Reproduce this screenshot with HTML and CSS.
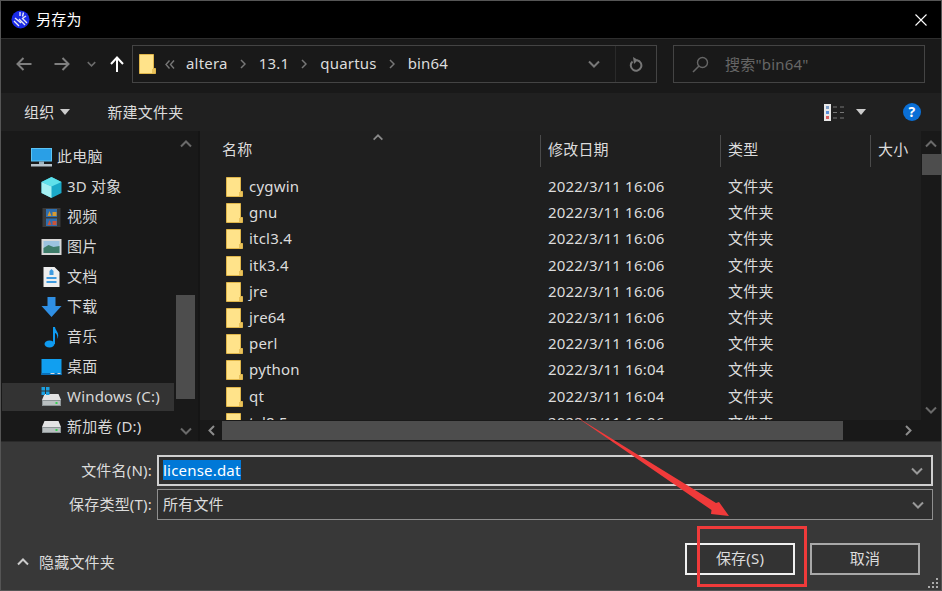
FILE: index.html
```html
<!DOCTYPE html>
<html>
<head>
<meta charset="UTF-8">
<title>另存为</title>
<link rel="stylesheet" href="styles.css">
</head>
<body>
<svg class="defs" width="0" height="0">
	<symbol id="folder" viewBox="0 0 17 20">
		<path d="M.5.5H14.5V14.5H16.5V19.5H.5Z" fill="#ffe38a" stroke="#e0b64a"/>
		<path d="M13 19V15H16V19Z" fill="#e9c25c"/>
	</symbol>
	<symbol id="drive" viewBox="0 0 20 14">
		<path d="M3 1H17L19.500 7V13H.5V7Z" fill="#e4e4e4"/>
		<rect x=".5" y="7" width="19" height="6" fill="#8d9496"/>
		<rect x="1.500" y="8" width="17" height="4" fill="#b9bfc0"/>
		<rect x="14" y="9" width="2" height="2" fill="#39d353"/>
	</symbol>
	<symbol id="chev-up" viewBox="0 0 12 8">
		<path d="M1 6.500L6 1.500L11 6.500" fill="none" stroke="currentColor" stroke-width="2"/>
	</symbol>
	<symbol id="chev-down" viewBox="0 0 12 8">
		<path d="M1 1.500L6 6.500L11 1.500" fill="none" stroke="currentColor" stroke-width="2"/>
	</symbol>
</svg>

<div class="window">
	<div class="titlebar">
		<svg class="app_icon" width="20" height="20" viewBox="0 0 20 20">
			<circle cx="9.500" cy="9.500" r="9" fill="#1a2be8"/>
			<path d="M9 2V6M12.500 2.500L11.500 6.500M15 6L12 8M4 8L10 13M3 11L8 16M8 9L14 15M11 8L16 13" stroke="#e8e8f4" stroke-width="1.400" fill="none"/>
		</svg>
		<span class="title_text">另存为</span>
		<svg class="close" width="12" height="12" viewBox="0 0 12 12">
			<path d="M.5.5L11.500 11.500M11.500.5L.5 11.500" stroke="#fff" stroke-width="1.100"/>
		</svg>
	</div>

	<div class="navbar">
		<svg class="nav_btn back" width="16" height="14" viewBox="0 0 16 14">
			<path d="M15.500 7H2M7.500 1L1.500 7L7.500 13" fill="none" stroke="#7f7f7f" stroke-width="2"/>
		</svg>
		<svg class="nav_btn forward" width="16" height="14" viewBox="0 0 16 14">
			<path d="M.5 7H14M8.500 1L14.500 7L8.500 13" fill="none" stroke="#7f7f7f" stroke-width="2"/>
		</svg>
		<svg class="nav_btn recent" width="9" height="6" viewBox="0 0 12 8"><use href="#chev-down" color="#6c6c6c"/></svg>
		<svg class="nav_btn up" width="14" height="16" viewBox="0 0 14 16">
			<path d="M7 16V2M1 8L7 1.500L13 8" fill="none" stroke="#fff" stroke-width="2"/>
		</svg>
		<div class="address">
			<svg class="crumb_folder" width="17" height="20"><use href="#folder"/></svg>
			<svg class="overflow" width="10" height="9" viewBox="0 0 10 9"><path d="M4.500 .5L1 4.500L4.500 8.500M9 .5L5.500 4.500L9 8.500" fill="none" stroke="#777" stroke-width="1.400"/></svg>
			<span class="crumb crumb_first">altera</span>
			<svg class="sep" width="6" height="10" viewBox="0 0 6 10"><path d="M1 1L5 5L1 9" fill="none" stroke="#777" stroke-width="1.500"/></svg>
			<span class="crumb">13.1</span>
			<svg class="sep" width="6" height="10" viewBox="0 0 6 10"><path d="M1 1L5 5L1 9" fill="none" stroke="#777" stroke-width="1.500"/></svg>
			<span class="crumb">quartus</span>
			<svg class="sep" width="6" height="10" viewBox="0 0 6 10"><path d="M1 1L5 5L1 9" fill="none" stroke="#777" stroke-width="1.500"/></svg>
			<span class="crumb">bin64</span>
			<svg class="addr_drop" width="12" height="8"><use href="#chev-down" color="#777"/></svg>
			<div class="refresh">
				<svg width="14" height="15" viewBox="0 0 14 15">
					<path d="M8 3.200A5.300 5.300 0 1 1 3.500 4.500" fill="none" stroke="#777" stroke-width="2"/>
					<path d="M4 0L9 3L5 7Z" fill="#777"/>
				</svg>
			</div>
		</div>
		<div class="search">
			<svg width="17" height="17" viewBox="0 0 17 17">
				<circle cx="10.500" cy="6.500" r="5" fill="none" stroke="#666" stroke-width="1.400"/>
				<path d="M7 10L1 16" stroke="#666" stroke-width="1.600"/>
			</svg>
			<span class="search_text">搜索"bin64"</span>
		</div>
	</div>

	<div class="toolbar">
		<span class="tool">组织</span>
		<span class="caret organize_caret"></span>
		<span class="tool new_folder">新建文件夹</span>
		<svg class="view_icon" width="21" height="17" viewBox="0 0 21 17">
			<rect x="0" y="0" width="7" height="17" fill="#e8e8e8"/>
			<rect x="2" y="2" width="3" height="3" fill="#7a9cc6"/>
			<rect x="2" y="7" width="3" height="3" fill="#5a8fd8"/>
			<rect x="2" y="12" width="3" height="3" fill="#d85a5a"/>
			<path d="M9 3H13M16 3H20M9 8.500H13M16 8.500H20M9 14H13M16 14H20" stroke="#777" stroke-width="1"/>
		</svg>
		<span class="caret view_caret"></span>
		<span class="help">?</span>
	</div>

	<div class="main">
		<div class="sidebar">
			<ul class="tree">
				<li class="tree_item root">
					<svg width="21" height="19" viewBox="0 0 21 19">
						<rect x="0" y="0" width="21" height="13.500" fill="#5cc4f5"/>
						<rect x="1" y="1" width="19" height="11.500" fill="#2a9fe6"/>
						<rect x="8" y="13.500" width="5" height="2.500" fill="#9db4c0"/>
						<rect x="0" y="16" width="21" height="2.500" fill="#b8c4cc"/>
					</svg>
					<span>此电脑</span>
				</li>
				<li class="tree_item">
					<svg width="21" height="21" viewBox="0 0 21 21">
						<path d="M10.500 0L20.500 5V16L10.500 21L.5 16V5Z" fill="#1aa9c9"/>
						<path d="M10.500 0L20.500 5L10.500 9.500L.5 5Z" fill="#5fe0ea"/>
						<path d="M.5 5L10.500 9.500V21L.5 16Z" fill="#a5f0f2"/>
					</svg>
					<span>3D 对象</span>
				</li>
				<li class="tree_item">
					<svg width="18" height="19" viewBox="0 0 18 19">
						<rect width="18" height="19" fill="#3a3a3a"/>
						<rect x="3.500" y="1" width="11" height="8" fill="#2f6fb0"/>
						<rect x="3.500" y="10.500" width="11" height="7.500" fill="#2f6fb0"/>
						<path d="M5 8L7 3L9 8ZM10 8H14V4H10Z" fill="#d89a30"/>
						<path d="M5 17L7 12L9 17ZM10 17H14V13H10Z" fill="#c8543c"/>
					</svg>
					<span>视频</span>
				</li>
				<li class="tree_item">
					<svg width="20" height="16" viewBox="0 0 20 16">
						<rect width="20" height="16" fill="#d8d8d8"/>
						<rect x="2" y="2" width="16" height="12" fill="#9cc3df"/>
						<path d="M2 9L7 6L12 8L18 7V14H2Z" fill="#3f7d6a"/>
					</svg>
					<span>图片</span>
				</li>
				<li class="tree_item">
					<svg width="16" height="20" viewBox="0 0 16 20">
						<path d="M0 0H11L16 5V20H0Z" fill="#eeeeee"/>
						<path d="M6 4L8 2L10 4V8H6ZM3 10H13V12H3ZM3 14H13V16H3Z" fill="#3f9be0"/>
					</svg>
					<span>文档</span>
				</li>
				<li class="tree_item">
					<svg width="20" height="20" viewBox="0 0 20 20">
						<path d="M6 0H14V9H20L10 20L0 9H6Z" fill="#2f8fe4"/>
					</svg>
					<span>下载</span>
				</li>
				<li class="tree_item">
					<svg width="20" height="21" viewBox="0 0 20 21">
						<ellipse cx="8" cy="17" rx="5" ry="3.500" fill="#0f9bf0"/>
						<path d="M11.500 17V0H13.500C14 4 18.500 6 16 12C16 8 15 6.500 13.500 6V17Z" fill="#0f9bf0"/>
					</svg>
					<span>音乐</span>
				</li>
				<li class="tree_item">
					<svg width="20" height="16" viewBox="0 0 20 16">
						<rect width="20" height="16" fill="#119ff0"/>
						<rect x="0" y="14" width="20" height="2" fill="#0a6fb8"/>
						<rect x="9" y="14" width="4" height="1" fill="#ddd"/>
						<rect x="16" y="14" width="3" height="1" fill="#ddd"/>
					</svg>
					<span>桌面</span>
				</li>
				<li class="tree_item selected">
					<svg width="20" height="20" viewBox="0 0 20 20">
						<use href="#drive" y="6" width="20" height="14"/>
						<path d="M0 0H3.500V3.500H0ZM4.500 0H8V3.500H4.500ZM0 4.500H3.500V8H0ZM4.500 4.500H8V8H4.500Z" fill="#1ba1e2"/>
					</svg>
					<span>Windows (C:)</span>
				</li>
				<li class="tree_item">
					<svg width="20" height="14"><use href="#drive"/></svg>
					<span>新加卷 (D:)</span>
				</li>
			</ul>
			<div class="vscroll side_scroll">
				<svg class="arrow_top" width="12" height="8"><use href="#chev-up"/></svg>
				<div class="side_thumb"></div>
				<svg class="arrow_bottom" width="12" height="8"><use href="#chev-down"/></svg>
			</div>
		</div>

		<div class="content">
			<div class="content_top">
				<div class="files">
					<div class="columns">
						<div class="col col_name">名称
							<svg class="sort" width="12" height="7" viewBox="0 0 12 8"><use href="#chev-up" color="#8a8a8a"/></svg>
						</div>
						<div class="col col_date">修改日期</div>
						<div class="col col_type">类型</div>
						<div class="col col_size">大小</div>
					</div>
					<div class="rows" id="rows"></div>
				</div>
				<div class="vscroll list_scroll">
					<svg class="arrow_top" width="12" height="8"><use href="#chev-up"/></svg>
					<div class="list_thumb"></div>
					<svg class="arrow_bottom" width="12" height="8"><use href="#chev-down"/></svg>
				</div>
			</div>
			<div class="hscroll">
				<svg width="7" height="11" viewBox="0 0 7 11"><path d="M6 1L1.500 5.500L6 10" fill="none" stroke="#8c8c8c" stroke-width="2"/></svg>
				<div class="h_thumb"></div>
				<svg class="h_right" width="7" height="11" viewBox="0 0 7 11"><path d="M1 1L5.500 5.500L1 10" fill="none" stroke="#8c8c8c" stroke-width="2"/></svg>
			</div>
		</div>
	</div>

	<div class="bottom">
		<div class="field">
			<label class="field_label">文件名(N):</label>
			<div class="field_box name_box">
				<span class="selected_text">license.dat</span>
				<svg width="12" height="8"><use href="#chev-down" color="#999"/></svg>
			</div>
		</div>
		<div class="field">
			<label class="field_label">保存类型(T):</label>
			<div class="field_box type_box">
				<span>所有文件</span>
				<svg width="12" height="8"><use href="#chev-down" color="#999"/></svg>
			</div>
		</div>
		<div class="actions">
			<div class="hide_folders">
				<svg width="12" height="8"><use href="#chev-up" color="#ccc"/></svg>
				<span>隐藏文件夹</span>
			</div>
			<button class="btn btn_save">保存(S)</button>
			<button class="btn btn_cancel">取消</button>
		</div>
		<svg class="grip" width="10" height="10" viewBox="0 0 10 10">
			<path d="M8 0h2v2H8ZM4 4h2v2H4ZM8 4h2v2H8ZM0 8h2v2H0ZM4 8h2v2H4ZM8 8h2v2H8Z" fill="#aaa"/>
		</svg>
	</div>

	<!-- 红色标注 -->
	<svg class="mark_arrow" width="942" height="591" viewBox="0 0 942 591">
		<polygon points="575,416 716,503 719,502 729,516 711,514 711.500,510" fill="#f03a3a"/>
	</svg>
	<div class="mark_box"></div>
</div>

<script type="text/javascript">
	var folders = [
		['cygwin', '16:06'], ['gnu', '16:06'], ['itcl3.4', '16:06'], ['itk3.4', '16:06'],
		['jre', '16:06'], ['jre64', '16:06'], ['perl', '16:06'], ['python', '16:04'],
		['qt', '16:04'], ['tcl8.5', '16:06']
	];
	var html = '';
	for (var i = 0; i < folders.length; i++) {
		html += '<div class="row">'
			+ '<svg class="row_icon" width="17" height="20"><use href="#folder"/></svg>'
			+ '<span class="row_name">' + folders[i][0] + '</span>'
			+ '<span class="row_date">2022/3/11 ' + folders[i][1] + '</span>'
			+ '<span>文件夹</span></div>';
	}
	document.getElementById('rows').innerHTML = html;
</script>
</body>
</html>
```

FILE: styles.css
```css
* {
	box-sizing: border-box;
}

html, body {
	margin: 0;
	height: 100%;
	background: #000;
}

.defs {
	position: absolute;
}

.window {
	position: relative;
	display: flex;
	flex-direction: column;
	width: 942px;
	height: 591px;
	overflow: hidden;
	border: 1px solid #555;
	background: #191919;
	color: #dcdcdc;
	font-family: "Noto Sans", "Noto Sans CJK SC", sans-serif;
	font-size: 15px;
	letter-spacing: .2px;
	line-height: 20px;
}

svg {
	display: block;
	flex: none;
}

/* 文字比图标略高一点 */
.title_text, .crumb, .tree_item span, .row span, .field_label, .field_box span {
	margin-top: -2px;
}

/* 标题栏 */
.titlebar {
	display: flex;
	align-items: center;
	flex: none;
	height: 38px;
	background: #000;
	border-bottom: 1px solid #2e2e2e;
	color: #fff;
}

.app_icon {
	margin-left: 10px;
}

.title_text {
	margin-left: 5px;
}

.close {
	margin-left: auto;
	margin-right: 14px;
}

/* 地址栏 */
.navbar {
	display: flex;
	align-items: center;
	flex: none;
	height: 54px;
	padding-bottom: 4px;
	background: #191919;
}

.back {
	margin-left: 15px;
}

.forward {
	margin-left: 22px;
}

.recent {
	margin-left: 17px;
}

.up {
	margin-left: 14px;
}

.address {
	display: flex;
	align-items: center;
	width: 525px;
	height: 38px;
	margin-left: 8px;
	border: 1px solid #444;
}

.crumb_folder {
	margin-left: 6px;
}

.overflow {
	margin-left: 9px;
}

.crumb {
	margin-left: 13px;
	margin-right: 12px;
}

.crumb_first {
	margin-left: 11px;
}

.addr_drop {
	margin-left: auto;
	margin-right: 15px;
}

.refresh {
	display: flex;
	align-items: center;
	justify-content: center;
	width: 41px;
	height: 100%;
	border-left: 1px solid #2a2a2a;
}

.search {
	display: flex;
	align-items: center;
	width: 252px;
	height: 38px;
	margin-left: 16px;
	padding-left: 18px;
	border: 1px solid #444;
	color: #666;
}

.search_text {
	margin-left: 16px;
}

/* 工具栏 */
.toolbar {
	display: flex;
	align-items: center;
	flex: none;
	height: 38px;
	background: #202020;
}

.tool {
	margin-left: 23px;
}

.caret {
	width: 0;
	height: 0;
	border-left: 5.5px solid transparent;
	border-right: 5.5px solid transparent;
	border-top: 6px solid #ccc;
}

.organize_caret {
	margin-left: 6px;
}

.new_folder {
	margin-left: 37px;
}

.view_icon {
	margin-left: auto;
}

.view_caret {
	margin-left: 11px;
}

.help {
	width: 18px;
	height: 18px;
	margin-left: 37px;
	margin-right: 20px;
	border-radius: 50%;
	background: #0a6fd6;
	color: #fff;
	font-size: 14px;
	font-weight: 700;
	line-height: 18px;
	text-align: center;
}

/* 主体 */
.main {
	display: flex;
	flex: none;
	height: 310px;
}

.sidebar {
	display: flex;
	flex: none;
	width: 199px;
	padding-right: 3px;
	background: #191919;
	border-right: 2px solid #151515;
}

.tree {
	flex: 1;
	margin: 0;
	padding: 11px 0 0 1px;
	list-style: none;
}

.tree_item {
	display: flex;
	align-items: center;
	height: 30px;
	padding-left: 39px;
	color: #d8d8d8;
}

.tree_item svg {
	width: 21px;
	margin-right: 5px;
}

.tree_item.root {
	padding-left: 29px;
}

.tree_item.selected {
	background: #333;
	height: 28px;
	margin: 1px 2px 1px 0;
}

.vscroll {
	display: flex;
	flex-direction: column;
	align-items: center;
	flex: none;
	width: 19px;
	color: #6a6a6a;
}

.arrow_top {
	margin-top: 9px;
}

.arrow_bottom {
	margin-top: auto;
	margin-bottom: 6px;
}

.side_thumb {
	width: 19px;
	height: 104px;
	margin-top: 147px;
	background: #4d4d4d;
}

.content {
	display: flex;
	flex-direction: column;
	flex: 1;
	min-width: 0;
	background: #1f1f1f;
}

.content_top {
	display: flex;
	flex: none;
	height: 289px;
}

.files {
	flex: 1;
	min-width: 0;
	overflow: hidden;
}

.columns {
	display: flex;
	align-items: center;
	height: 37px;
	padding-top: 2px;
}

.col {
	position: relative;
	height: 32px;
	padding: 4px 0 0 7px;
	border-right: 1px solid #4a4a4a;
}

.col_name {
	width: 341px;
	padding-left: 22px;
}

.col_date {
	width: 180px;
}

.col_type {
	width: 150px;
}

.col_size {
	flex: 1;
	border-right: none;
}

.sort {
	position: absolute;
	top: -1px;
	left: 172px;
}

.rows {
	height: 252px;
	padding-top: 6px;
	overflow: hidden;
}

.row {
	display: flex;
	align-items: center;
	height: 26.2px;
	padding-left: 26px;
}

.row_name {
	width: 299px;
	margin-left: 6px;
}

.row_date {
	width: 180px;
}

.list_scroll {
	width: 20px;
	background: #191919;
}

.list_thumb {
	width: 19px;
	height: 21px;
	margin-top: 6px;
	background: #4d4d4d;
}

.hscroll {
	display: flex;
	align-items: center;
	flex: none;
	height: 21px;
	padding-left: 8px;
	background: #191919;
}

.h_thumb {
	width: 621px;
	height: 19px;
	margin-left: 7px;
	background: #4d4d4d;
}

.h_right {
	margin-left: 62px;
}

/* 底部 */
.bottom {
	position: relative;
	flex: 1;
	padding-top: 13px;
	background: #383838;
	border-top: 1px solid #2a2a2a;
}

.field {
	display: flex;
	align-items: center;
	height: 31px;
	margin-bottom: 3px;
}

.field_label {
	width: 151px;
	text-align: right;
}

.field_box {
	display: flex;
	align-items: center;
	justify-content: space-between;
	width: 776px;
	height: 31px;
	margin-left: 5px;
	padding: 0 8px 0 4px;
	background: #2f2f2f;
}

.name_box {
	border: 2px solid #d0d0d0;
}

.type_box {
	padding-left: 5px;
	border: 1px solid #8f8f8f;
}

.selected_text {
	background: #0078d7;
	color: #fff;
}

.actions {
	display: flex;
	align-items: center;
	margin-top: 23px;
}

.hide_folders {
	display: flex;
	align-items: center;
	margin-top: 5px;
	margin-left: 16px;
	margin-right: auto;
}

.hide_folders span {
	margin-left: 10px;
}

.btn {
	width: 110px;
	height: 32px;
	padding: 0 0 3px;
	background: #333;
	color: #dcdcdc;
	font: inherit;
	letter-spacing: inherit;
}

.btn_save {
	border: 2px solid #f0f0f0;
}

.btn_cancel {
	margin-left: 15px;
	margin-right: 21px;
	border: 2px solid #a8a8a8;
}

.grip {
	position: absolute;
	right: 3px;
	bottom: 2px;
}

/* 红色标注 */
.mark_arrow {
	position: absolute;
	top: -1px;
	left: -1px;
	pointer-events: none;
}

.mark_box {
	position: absolute;
	top: 525px;
	left: 696px;
	width: 110px;
	height: 61px;
	border: 3px solid #f03a3a;
}
```
